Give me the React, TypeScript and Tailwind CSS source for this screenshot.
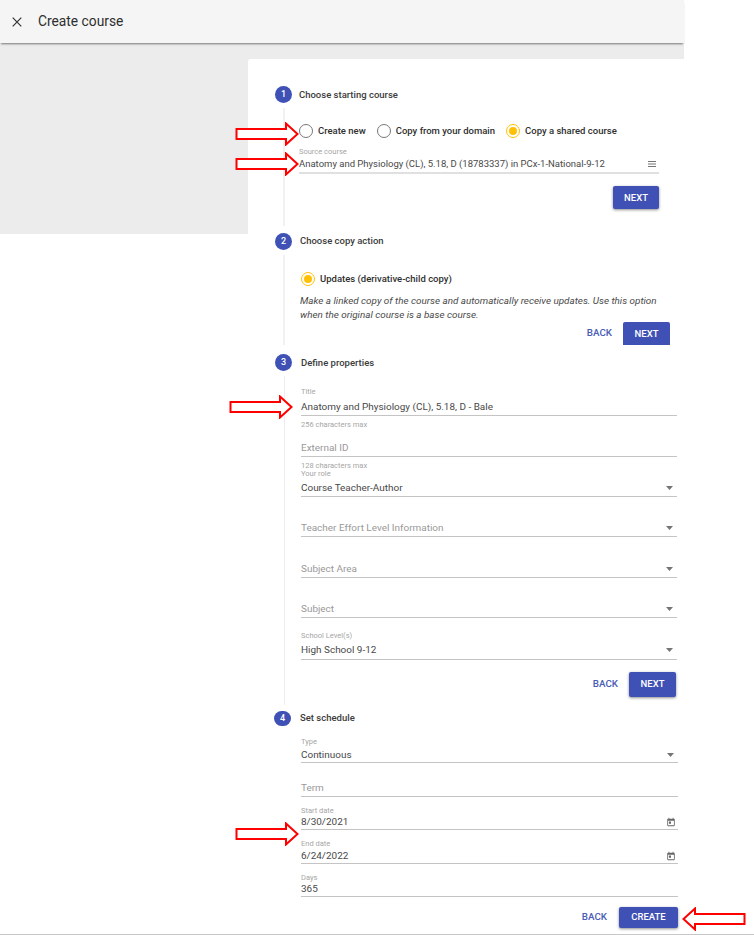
import React from "react";

const Caret = () => (
  <svg width="7" height="4" viewBox="0 0 7 4" className="shrink-0 mr-[4px]"><path d="M0 0h7L3.5 4z" fill="#757575" /></svg>
);
const Cal = () => (
  <svg width="10" height="10" viewBox="0 0 24 24" className="shrink-0 mr-[2px]" fill="#666">
    <path d="M19 4h-1V2h-2v2H8V2H6v2H5a2 2 0 0 0-2 2v14a2 2 0 0 0 2 2h14a2 2 0 0 0 2-2V6a2 2 0 0 0-2-2zm0 16H5V9h14v11zM7 11h5v5H7z" />
  </svg>
);
const Menu = () => (
  <svg width="8" height="6" viewBox="0 0 8 6" className="shrink-0" fill="#757575">
    <rect y="0" width="8" height="1" /><rect y="2.5" width="8" height="1" /><rect y="5" width="8" height="1" />
  </svg>
);

function Arrow({ cls, flip }: { cls: string; flip?: boolean }) {
  return (
    <svg width="64" height="24" viewBox="0 0 64 24" className={`absolute ${cls}`} style={flip ? { transform: "scaleX(-1)" } : undefined}>
      <path d="M1.5 7H51V1.5L62.5 12 51 22.5V17H1.5z" fill="#fff" stroke="#f00" strokeWidth="2" />
    </svg>
  );
}

function Head({ n, title, cls, circle, tcls }: { n: number; title: string; cls: string; circle?: string; tcls: string }) {
  return (
    <div className={`flex items-center ml-[27px] ${cls}`}>
      <div className={`flex items-center justify-center rounded-full bg-[#3f51b5] text-white text-[9px] font-medium ${circle ?? "w-[17px] h-[17px]"}`}>{n}</div>
      <div className={`text-[#3c3c3c] text-[9.5px] font-medium ${tcls}`}>{title}</div>
    </div>
  );
}

function Radio({ on, label, cls }: { on?: boolean; label: string; cls: string }) {
  return (
    <div className={`flex items-center ${cls}`}>
      <div className={`w-[14px] h-[14px] rounded-full border flex items-center justify-center ${on ? "border-[#ffc107]" : "border-[#777]"}`}>
        {on && <div className="w-[8px] h-[8px] rounded-full bg-[#ffc107]" />}
      </div>
      <span className="ml-[5px] text-[9.5px] font-medium text-[#2f2f2f]">{label}</span>
    </div>
  );
}

function Field({ label, value, placeholder, icon, cls, line, gap, size }: { label?: string; value?: string; placeholder?: string; icon?: React.ReactNode; cls: string; line: string; gap: string; size?: string }) {
  return (
    <div className={cls}>
      {label && <div className="h-[8px] leading-[8px] text-[7.5px] text-[#a6a6a6]">{label}</div>}
      <div className={`flex items-center justify-between h-[14px] ${gap}`}>
        <span className={`${size ?? "text-[9.95px]"} ${value ? "text-[#484848]" : "text-[#999]"}`}>{value ?? placeholder}</span>
        {icon}
      </div>
      <div className={line} />
    </div>
  );
}

function Helper({ text, cls }: { text: string; cls: string }) {
  return <div className={`h-[8px] leading-[8px] text-[7.5px] text-[#a6a6a6] ${cls}`}>{text}</div>;
}

function Btn({ label, w, h, flat }: { label: string; w: string; h: string; flat?: boolean }) {
  return (
    <div className={`flex items-center justify-center bg-[#3f51b5] text-white text-[9.5px] font-medium ${w} ${h} ${flat ? "rounded-t-[2px]" : "rounded-[2px] shadow-[0_1px_3px_rgba(0,0,0,0.45)]"}`}>{label}</div>
  );
}
const Back = ({ cls }: { cls: string }) => <span className={`text-[#4a5cb8] text-[9.8px] font-medium ${cls}`}>BACK</span>;

const L3 = "h-[2px] pt-[1px] border-b border-[#c4c4c4]";
const L1 = "h-[1px] bg-[#c4c4c4]";

export default function App() {
  return (
    <div className="relative w-[754px] h-[935px] overflow-hidden bg-white flex flex-col font-['Roboto',sans-serif]">
      <header className="relative z-10 w-[684px] h-[43px] shrink-0 bg-[#f5f5f5] shadow-[0_2px_2px_-1px_rgba(0,0,0,0.5)] flex items-center">
        <svg width="10" height="10" viewBox="0 0 10 10" className="ml-[12px] mt-[1px]"><path d="M.7.7l8.6 8.6M9.3.7L.7 9.3" stroke="#333" strokeWidth="1.2" fill="none" /></svg>
        <h1 className="ml-[16px] text-[13.8px] font-normal text-[#2e2e2e]">Create course</h1>
      </header>

      <div className="w-[684px] h-[191px] shrink-0 bg-[#ececec] pt-[16px]">
        <main className="ml-[248px] w-[436px] h-[875px] bg-white rounded-tl-[3px] pt-[27px]">
          <Head n={1} title="Choose starting course" cls="" tcls="ml-[7px] pt-[2px]" />
          <section className="mt-[5px] ml-[35px] h-[118px] border-l-2 border-[#f1f1f1] pl-[14px]">
            <div className="flex pt-[16px]">
              <Radio label="Create new" cls="mr-[11px]" />
              <Radio label="Copy from your domain" cls="mr-[11px]" />
              <Radio on label="Copy a shared course" cls="" />
            </div>
            <Field label="Source course" value="Anatomy and Physiology (CL), 5.18, D (18783337) in PCx-1-National-9-12" size="text-[9.5px]" icon={<span className="mr-[3px]"><Menu /></span>} cls="w-[360px] mt-[10px]" gap="mt-[1px]" line="mt-[1px] h-[2px] bg-[#e0e0e0]" />
            <div className="w-[360px] flex justify-end mt-[12px]">
              <Btn label="NEXT" w="w-[46px]" h="h-[23px]" />
            </div>
          </section>

          <Head n={2} title="Choose copy action" cls="mt-[7px]" tcls="ml-[8px]" />
          <section className="mt-[5px] ml-[35px] h-[90px] border-l-2 border-[#f1f1f1] pl-[15px]">
            <div className="pt-[17px]"><Radio on label="Updates (derivative-child copy)" cls="ml-[1px]" /></div>
            <p className="mt-[8px] w-[375px] text-[9.9px] leading-[14px] italic text-[#4a4a4a]">
              Make a linked copy of the course and automatically receive updates. Use this option when the original course is a base course.
            </p>
            <div className="w-[370px] flex justify-end items-center">
              <Back cls="mr-[11px]" />
              <Btn label="NEXT" w="w-[47px]" h="h-[23px]" flat />
            </div>
          </section>

          <Head n={3} title="Define properties" cls="mt-[9px]" tcls="ml-[9px] pt-[2px]" />
          <section className="mt-[5px] ml-[36px] h-[329px] border-l border-[#eeeeee] pl-[16px]">
            <div className="w-[376px] pt-[12px]">
              <Field label="Title" value="Anatomy and Physiology (CL), 5.18, D - Bale" gap="mt-[4px]" cls="" line={L3} />
              <Helper text="256 characters max" cls="mt-[5px]" />
              <Field placeholder="External ID" gap="" cls="mt-[12px]" line={L3} />
              <Helper text="128 characters max" cls="mt-[5px]" />
              <Field label="Your role" value="Course Teacher-Author" icon={<Caret />} gap="mt-[3px]" cls="" line={L3} />
              <Field placeholder="Teacher Effort Level Information" icon={<Caret />} gap="" cls="mt-[24px]" line={L3} />
              <Field placeholder="Subject Area" icon={<Caret />} gap="" cls="mt-[25px]" line={L3} />
              <Field placeholder="Subject" icon={<Caret />} gap="" cls="mt-[24px]" line={L3} />
              <Field label="School Level(s)" value="High School 9-12" icon={<Caret />} gap="mt-[3px]" cls="mt-[14px]" line="h-[3px] border-b border-[#c4c4c4]" />
              <div className="flex justify-end items-center mt-[12px] pr-[1px]">
                <Back cls="mr-[11px]" />
                <Btn label="NEXT" w="w-[47px]" h="h-[25px]" />
              </div>
            </div>
          </section>

          <Head n={4} title="Set schedule" cls="mt-[6px]" circle="w-[17px] h-[15px] -ml-[1px]" tcls="ml-[9px]" />
          <section className="ml-[53px] w-[377px]">
            <Field label="Type" value="Continuous" icon={<Caret />} gap="mt-[2px]" cls="mt-[12px]" line={L1} />
            <Field placeholder="Term" gap="" cls="mt-[18px]" line={L3} />
            <Field label="Start date" value="8/30/2021" icon={<Cal />} gap="" cls="mt-[10px]" line={L1} />
            <Field label="End date" value="6/24/2022" icon={<Cal />} gap="mt-[1px]" cls="mt-[10px]" line={L1} />
            <Field label="Days" value="365" gap="" cls="mt-[10px]" line={L1} />
            <div className="flex justify-end items-center mt-[10px] w-[377px]">
              <Back cls="mr-[12px]" />
              <Btn label="CREATE" w="w-[59px]" h="h-[21px]" />
            </div>
          </section>
        </main>
      </div>

      <div className="mt-auto h-[1px] bg-[#c8c8c8] shrink-0" />

      <Arrow cls="left-[235px] top-[122px]" />
      <Arrow cls="left-[235px] top-[152px]" />
      <Arrow cls="left-[229px] top-[395px]" />
      <Arrow cls="left-[235px] top-[822px]" />
      <Arrow cls="left-[682px] top-[907px]" flip />
    </div>
  );
}
